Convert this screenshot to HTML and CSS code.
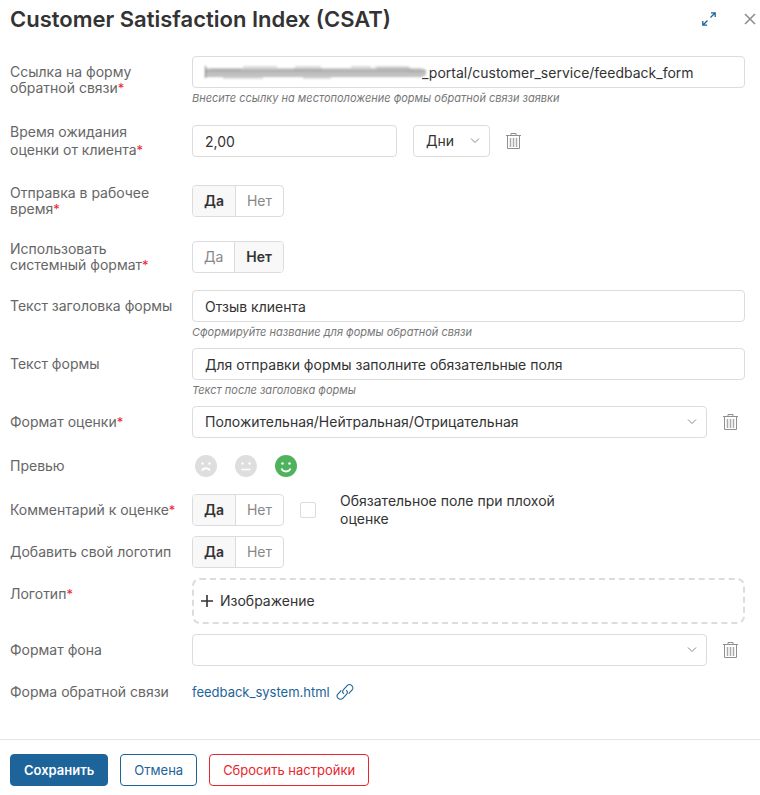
FILE: index.html
```
<!DOCTYPE html>
<html lang="ru">
<head>
  <meta charset="UTF-8">
  <meta name="viewport" content="width=device-width, initial-scale=1.0">
  <title>Customer Satisfaction Index (CSAT)</title>
  <link rel="stylesheet" href="styles.css">
</head>
<body>
  <svg class="sprite" aria-hidden="true">
    <symbol id="icon-trash" viewBox="0 0 15 18">
      <path d="M0 3.500h15M5 3V1.500h5V3M1.500 4v12.500h12V4" fill="none" stroke="#8f8f8f"/>
      <path d="M4.500 6v9M7.500 6v9M10.500 6v9" fill="none" stroke="#aaa" stroke-width="1.500"/>
    </symbol>
  </svg>

  <form class="dialog">
    <header class="dialog-header">
      <h1>Customer Satisfaction Index (CSAT)</h1>
      <button type="button" class="icon-btn" aria-label="Развернуть">
        <svg width="14" height="14" viewBox="0 0 14 14" fill="none" stroke="#1c6499" stroke-width="1.300">
          <path d="M9 .8h4.200V5M13 1L8.500 5.500M.8 9v4.200H5M1 13l4.500-4.500"/>
        </svg>
      </button>
      <button type="button" class="icon-btn" aria-label="Закрыть">
        <svg width="12" height="12" viewBox="0 0 12 12" fill="none" stroke="#8c8c8c" stroke-width="1.500">
          <path d="M1 1l10 10M11 1L1 11"/>
        </svg>
      </button>
    </header>

    <div class="fields">
      <div class="row gap-md">
        <label class="row-label low" for="form-link"><span>Ссылка на форму<br>обратной связи<b class="req">*</b></span></label>
        <div>
          <div class="masked">
            <input class="control masked-input" type="text" id="form-link" value="_portal/customer_service/feedback_form">
            <svg class="mask" width="224" height="16" viewBox="0 0 224 16" aria-hidden="true">
              <defs>
                <linearGradient id="smear" x1="0" x2="0" y1="0" y2="1">
                  <stop offset="0" stop-color="#ddd"/>
                  <stop offset=".3" stop-color="#aaa"/>
                  <stop offset=".6" stop-color="#c4c4c4"/>
                  <stop offset="1" stop-color="#bbb"/>
                </linearGradient>
              </defs>
              <path d="M1 3h215l5 2v5l-4 2H1z" fill="url(#smear)"/>
              <path d="M38 2h34M90 2h26M146 2h20M170 2h34M18 13h40M98 13h28" stroke="#ddd" stroke-width="2"/>
              <path d="M6 4.500h30M88 4.500h30M172 3.500h34M200 6.500h16" stroke="#aaa"/>
              <path d="M.5 1v12" stroke="#777"/>
            </svg>
          </div>
          <p class="hint">Внесите ссылку на местоположение формы обратной связи заявки</p>
        </div>
      </div>

      <div class="row gap-xl">
        <label class="row-label loose" for="wait-time"><span>Время ожидания<br>оценки от клиента<b class="req">*</b></span></label>
        <div class="line">
          <input class="control wait" type="text" id="wait-time" value="2,00">
          <select class="control unit" aria-label="Единица времени">
            <option>Дни</option>
          </select>
          <button type="button" class="icon-btn" aria-label="Очистить"><svg width="15" height="18"><use href="#icon-trash"/></svg></button>
        </div>
      </div>

      <div class="row gap-lg">
        <div class="row-label" id="work-label"><span>Отправка в рабочее<br>время<b class="req">*</b></span></div>
        <div class="switch" role="radiogroup" aria-labelledby="work-label">
          <label><input type="radio" name="work" checked><span>Да</span></label>
          <label><input type="radio" name="work"><span>Нет</span></label>
        </div>
      </div>

      <div class="row gap-md">
        <div class="row-label" id="system-label"><span>Использовать<br>системный формат<b class="req">*</b></span></div>
        <div class="switch" role="radiogroup" aria-labelledby="system-label">
          <label><input type="radio" name="system"><span>Да</span></label>
          <label><input type="radio" name="system" checked><span>Нет</span></label>
        </div>
      </div>

      <div class="row gap-xs">
        <label class="row-label" for="form-title">Текст заголовка формы</label>
        <div>
          <input class="control" type="text" id="form-title" value="Отзыв клиента">
          <p class="hint">Сформируйте название для формы обратной связи</p>
        </div>
      </div>

      <div class="row gap-xs">
        <label class="row-label" for="form-text">Текст формы</label>
        <div>
          <input class="control" type="text" id="form-text" value="Для отправки формы заполните обязательные поля">
          <p class="hint">Текст после заголовка формы</p>
        </div>
      </div>

      <div class="row gap-md">
        <label class="row-label" for="rating"><span>Формат оценки<b class="req">*</b></span></label>
        <div class="line">
          <select class="control grow" id="rating">
            <option>Положительная/Нейтральная/Отрицательная</option>
          </select>
          <button type="button" class="icon-btn end" aria-label="Очистить"><svg width="15" height="18"><use href="#icon-trash"/></svg></button>
        </div>
      </div>

      <div class="row gap-md">
        <div class="row-label short">Превью</div>
        <div class="faces">
          <svg width="22" height="22" viewBox="0 0 22 22">
            <circle cx="11" cy="11" r="11" fill="#dedede"/>
            <circle cx="7.500" cy="8.500" r="1.200" fill="#fff"/><circle cx="14.500" cy="8.500" r="1.200" fill="#fff"/>
            <path d="M7 15.500c1.500-3 6.500-3 8 0" fill="none" stroke="#fff" stroke-width="1.800"/>
          </svg>
          <svg width="22" height="22" viewBox="0 0 22 22">
            <circle cx="11" cy="11" r="11" fill="#dedede"/>
            <circle cx="7.500" cy="8.500" r="1.200" fill="#fff"/><circle cx="14.500" cy="8.500" r="1.200" fill="#fff"/>
            <path d="M6.500 14.500h9" fill="none" stroke="#fff" stroke-width="1.500"/>
          </svg>
          <svg width="22" height="22" viewBox="0 0 22 22">
            <circle cx="11" cy="11" r="11" fill="#4fb35e"/>
            <circle cx="7.500" cy="8.500" r="1.200" fill="#fff"/><circle cx="14.500" cy="8.500" r="1.200" fill="#fff"/>
            <path d="M6.500 13.500c1.500 4 7.500 4 9 0" fill="none" stroke="#fff" stroke-width="1.800"/>
          </svg>
        </div>
      </div>

      <div class="row gap-sm">
        <div class="row-label" id="comment-label"><span>Комментарий к оценке<b class="req">*</b></span></div>
        <div class="line">
          <div class="switch" role="radiogroup" aria-labelledby="comment-label">
            <label><input type="radio" name="comment" checked><span>Да</span></label>
            <label><input type="radio" name="comment"><span>Нет</span></label>
          </div>
          <label class="check"><input type="checkbox"><span>Обязательное поле при плохой оценке</span></label>
        </div>
      </div>

      <div class="row gap-sm">
        <div class="row-label" id="own-label">Добавить свой логотип</div>
        <div class="switch" role="radiogroup" aria-labelledby="own-label">
          <label><input type="radio" name="own" checked><span>Да</span></label>
          <label><input type="radio" name="own"><span>Нет</span></label>
        </div>
      </div>

      <div class="row gap-sm">
        <div class="row-label"><span>Логотип<b class="req">*</b></span></div>
        <button type="button" class="upload">
          <svg width="12" height="12" viewBox="0 0 12 12" stroke="#333" stroke-width="1.600"><path d="M6 0v12M0 6h12"/></svg>
          Изображение
        </button>
      </div>

      <div class="row gap-sm">
        <label class="row-label" for="background">Формат фона</label>
        <div class="line">
          <select class="control grow" id="background">
            <option></option>
          </select>
          <button type="button" class="icon-btn end" aria-label="Очистить"><svg width="15" height="18"><use href="#icon-trash"/></svg></button>
        </div>
      </div>

      <div class="row">
        <div class="row-label">Форма обратной связи</div>
        <a class="file-link" href="#">feedback_system.html
          <svg width="18" height="18" viewBox="0 0 18 18" fill="none" stroke="#1c6499" stroke-width="1.100">
            <path d="M7.800 10.800a3 3 0 0 1-.3-4.200l3.700-3.900a3.200 3.200 0 0 1 4.700 4.500l-3.200 3.400M10.200 7.200a3 3 0 0 1 .3 4.200l-3.700 3.900a3.200 3.200 0 0 1-4.700-4.500l3.200-3.400"/>
          </svg>
        </a>
      </div>
    </div>

    <footer class="dialog-footer">
      <button type="submit" class="btn btn-primary">Сохранить</button>
      <button type="button" class="btn">Отмена</button>
      <button type="reset" class="btn btn-danger">Сбросить настройки</button>
    </footer>
  </form>
</body>
</html>
```
FILE: styles.css
```
* {
  margin: 0;
  padding: 0;
  box-sizing: border-box;
}

body {
  font-family: Inter, "Liberation Sans", sans-serif;
  font-size: 14px;
  line-height: 18px;
  color: #333;
  background: #fff;
}

button,
input,
select {
  font: inherit;
  color: inherit;
}

button {
  cursor: pointer;
}

.sprite {
  display: none;
}

.dialog {
  min-height: 100vh;
  display: flex;
  flex-direction: column;
}

.dialog-header {
  display: flex;
  align-items: center;
  gap: 28px;
  padding: 4px 4px 0 10px;
}

.dialog-header h1 {
  flex: 1;
  font-size: 22px;
  line-height: 30px;
  font-weight: 600;
}

.icon-btn {
  border: none;
  background: none;
  line-height: 0;
}

/* Form rows */
.fields {
  flex: 1;
  padding: 22px 15px 24px 10px;
}

.row {
  display: grid;
  grid-template-columns: 174px 1fr;
  column-gap: 8px;
}

.gap-xs { margin-bottom: 6px; }
.gap-sm { margin-bottom: 10px; }
.gap-md { margin-bottom: 17px; }
.gap-lg { margin-bottom: 24px; }
.gap-xl { margin-bottom: 28px; }

.row-label {
  display: flex;
  align-items: center;
  height: 32px;
  line-height: 16px;
  color: #666;
}

.row-label.low {
  margin-top: 8px;
}

.row-label.loose {
  line-height: 18px;
}

.row-label.short {
  height: 22px;
}

.req {
  color: #e8262d;
  font-size: 13px;
  line-height: 1;
  font-weight: 400;
}

.line {
  display: flex;
  align-items: center;
  gap: 16px;
}

.control {
  width: 100%;
  height: 32px;
  padding: 0 12px;
  border: 1px solid #dcdcdc;
  border-radius: 4px;
  background: #fff;
  display: block;
}

select.control {
  appearance: none;
  padding-right: 32px;
  background: #fff url("data:image/svg+xml,%3Csvg xmlns='http://www.w3.org/2000/svg' width='10' height='6' fill='none' stroke='%23888'%3E%3Cpath d='M1 .5l4 4 4-4'/%3E%3C/svg%3E") no-repeat right 9px center;
}

.control.wait {
  width: 205px;
}

.control.unit {
  width: 77px;
}

.control.grow {
  flex: 1;
}

.icon-btn.end {
  margin-right: 7px;
}

.masked {
  position: relative;
}

.masked-input {
  padding-left: 229px;
}

/* Smeared part of the address */
.mask {
  position: absolute;
  left: 13px;
  top: 9px;
  filter: blur(1px);
}

.hint {
  font-size: 11px;
  line-height: 20px;
  font-style: italic;
  color: #777;
}

.switch {
  display: flex;
  justify-self: start;
  border: 1px solid #dcdcdc;
  border-radius: 4px;
  overflow: hidden;
}

.switch input {
  position: absolute;
  opacity: 0;
}

.switch span {
  display: block;
  padding: 0 11px;
  line-height: 30px;
  color: #888;
}

.switch input:checked + span {
  background: #f8f8f8;
  color: #333;
  font-weight: 600;
}

.switch label + label {
  border-left: 1px solid #dcdcdc;
}

.faces {
  display: flex;
  gap: 18px;
  padding-left: 3px;
}

.check {
  display: flex;
  align-items: center;
  gap: 24px;
  height: 32px;
}

.check input {
  appearance: none;
  width: 16px;
  height: 16px;
  border: 1px solid #dcdcdc;
  border-radius: 2px;
}

.check span {
  width: 220px;
}

.upload {
  display: flex;
  align-items: center;
  gap: 7px;
  height: 46px;
  padding: 0 7px;
  border: 2px dashed #dcdcdc;
  border-radius: 8px;
  background: #fff;
}

.file-link {
  display: flex;
  align-items: center;
  justify-self: start;
  gap: 6px;
  font-size: 13px;
  color: #1c6499;
  text-decoration: none;
}

/* Footer */
.dialog-footer {
  display: flex;
  gap: 12px;
  padding: 14px 10px 9px;
  border-top: 1px solid #e5e5e5;
}

.btn {
  height: 32px;
  padding: 0 13px;
  border: 1px solid #1c6499;
  border-radius: 4px;
  background: #fff;
  color: #1c6499;
  font-size: 13px;
}

.btn-primary {
  background: #1c6499;
  color: #fff;
  font-weight: 600;
}

.btn-danger {
  border-color: #e8262d;
  color: #e8262d;
}
```
